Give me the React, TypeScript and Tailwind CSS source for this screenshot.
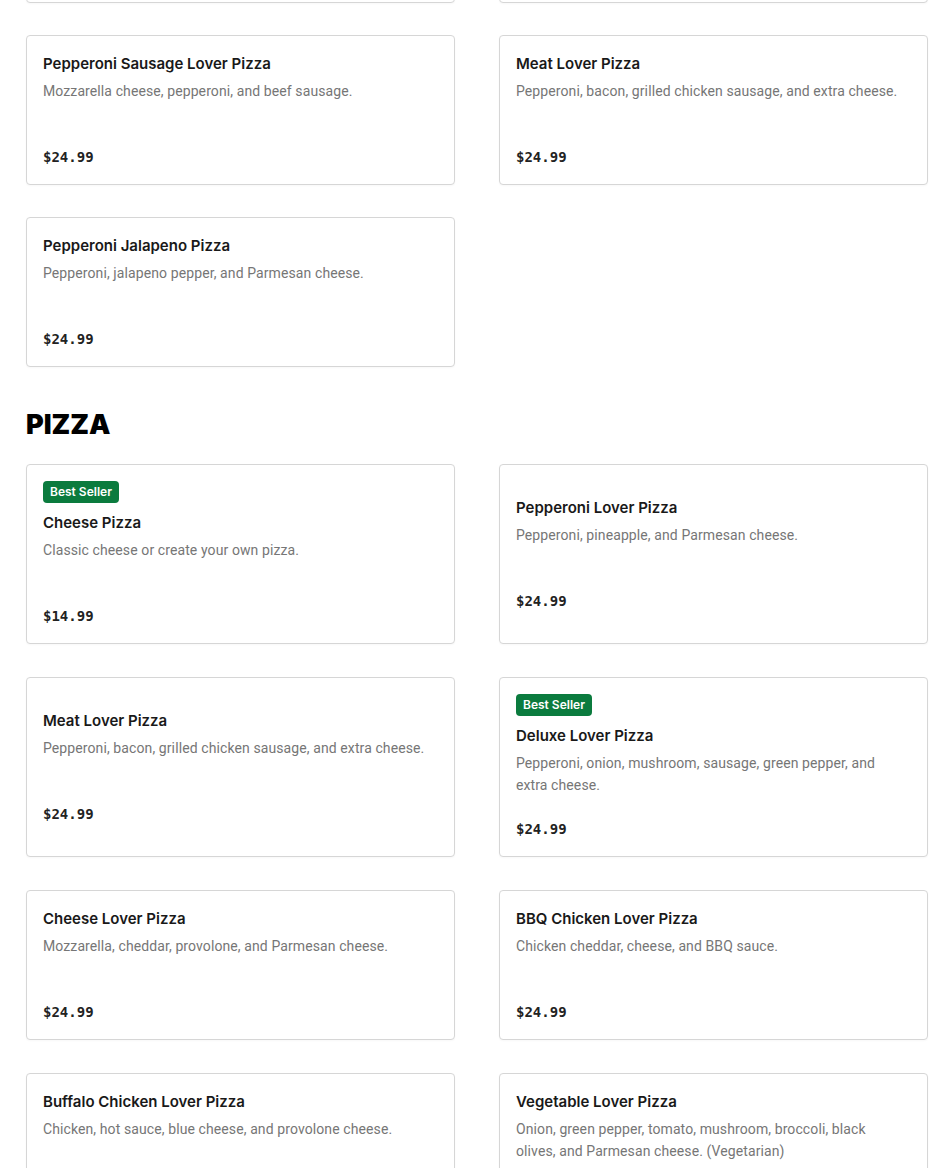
import React from "react";

interface Item {
	name: string;
	desc: string;
	price: string;
	badge?: boolean;
}

const previous: Item[] = [
	{ name: "Hawaiian Lover Pizza", desc: "Ham, pineapple, and Parmesan cheese.", price: "$24.99" },
	{ name: "Supreme Lover Pizza", desc: "Pepperoni, sausage, onion, and green pepper.", price: "$24.99" },
	{ name: "Pepperoni Sausage Lover Pizza", desc: "Mozzarella cheese, pepperoni, and beef sausage.", price: "$24.99" },
	{ name: "Meat Lover Pizza", desc: "Pepperoni, bacon, grilled chicken sausage, and extra cheese.", price: "$24.99" },
	{ name: "Pepperoni Jalapeno Pizza", desc: "Pepperoni, jalapeno pepper, and Parmesan cheese.", price: "$24.99" },
];

const pizza: Item[] = [
	{ name: "Cheese Pizza", desc: "Classic cheese or create your own pizza.", price: "$14.99", badge: true },
	{ name: "Pepperoni Lover Pizza", desc: "Pepperoni, pineapple, and Parmesan cheese.", price: "$24.99" },
	{ name: "Meat Lover Pizza", desc: "Pepperoni, bacon, grilled chicken sausage, and extra cheese.", price: "$24.99" },
	{ name: "Deluxe Lover Pizza", desc: "Pepperoni, onion, mushroom, sausage, green pepper, and extra cheese.", price: "$24.99", badge: true },
	{ name: "Cheese Lover Pizza", desc: "Mozzarella, cheddar, provolone, and Parmesan cheese.", price: "$24.99" },
	{ name: "BBQ Chicken Lover Pizza", desc: "Chicken cheddar, cheese, and BBQ sauce.", price: "$24.99" },
	{ name: "Buffalo Chicken Lover Pizza", desc: "Chicken, hot sauce, blue cheese, and provolone cheese.", price: "$24.99" },
	{ name: "Vegetable Lover Pizza", desc: "Onion, green pepper, tomato, mushroom, broccoli, black olives, and Parmesan cheese. (Vegetarian)", price: "$24.99" },
];

function Card({ item }: { item: Item }) {
	return (
		<div className="flex flex-col justify-center rounded-[4px] border border-[#d6d6d6] bg-white p-4 shadow-[0_1px_2px_rgba(0,0,0,0.03)]">
			{item.badge ? (
				<div className="mb-2 flex">
					<span className="h-[22px] rounded-[4px] bg-[#0b7b3e] px-[7px] text-[12px] font-semibold leading-[22px] text-white">
						Best Seller
					</span>
				</div>
			) : null}
			<div className="text-[15px] font-semibold leading-6 text-[#191919]">{item.name}</div>
			<div
				className="mt-1 min-h-[44px] pr-2 text-[14px] leading-[22px] tracking-[0.1px] text-[#767676]"
				style={{ fontFamily: 'Roboto, "Noto Sans", sans-serif' }}
			>
				{item.desc}
			</div>
			<div
				className="mt-[22px] text-[14px] font-bold leading-[22px] text-[#222]"
				style={{ fontFamily: '"DejaVu Sans Mono", monospace' }}
			>
				{item.price}
			</div>
		</div>
	);
}

export default function App() {
	return (
		<div className="h-[1168px] overflow-hidden bg-white" style={{ fontFamily: 'Inter, "Noto Sans", sans-serif' }}>
			<div className="mt-[-147px] w-[928px] pl-[26px]">
				<div className="grid grid-cols-2 gap-x-[44px] gap-y-8">
					{previous.map((item, i) => (
						<Card key={i} item={item} />
					))}
				</div>
				<h2 className="mt-[40px] mb-[21px] text-[27px] font-black leading-9 text-black">
					PIZZA
				</h2>
				<div className="grid grid-cols-2 gap-x-[44px] gap-y-[33px]">
					{pizza.map((item, i) => (
						<Card key={i} item={item} />
					))}
				</div>
			</div>
		</div>
	);
}
